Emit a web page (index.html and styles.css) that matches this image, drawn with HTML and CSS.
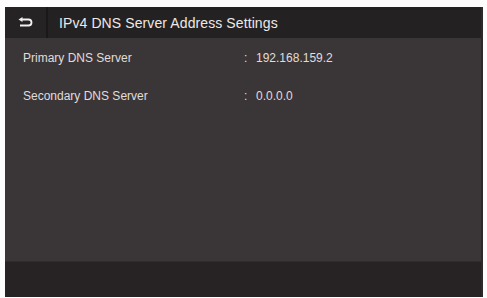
FILE: index.html
```html
<!DOCTYPE html>
<html lang="en">
<head>
    <meta charset="UTF-8">
    <meta name="viewport" content="width=device-width, initial-scale=1.0">
    <title>IPv4 DNS Server Address Settings</title>
    <link rel="stylesheet" href="styles.css">
</head>
<body>
    <div class="screen">
        <div class="header">
            <div class="back">
                <svg width="15" height="11" viewBox="0 0 15 11">
                    <path d="M4 2.5 H10.5 A3 3 0 0 1 10.5 8.5 H2" fill="none" stroke="#f2f0f0" stroke-width="1.8"/>
                    <path d="M0.5 2.5 L4.5 0 V5 Z" fill="#f2f0f0"/>
                </svg>
            </div>
            <h1>IPv4 DNS Server Address Settings</h1>
        </div>
        <div class="content">
            <div class="row">
                <span class="label">Primary DNS Server</span>
                <span class="colon">:</span>
                <span class="value">192.168.159.2</span>
            </div>
            <div class="row">
                <span class="label">Secondary DNS Server</span>
                <span class="colon">:</span>
                <span class="value">0.0.0.0</span>
            </div>
        </div>
        <div class="footer"></div>
    </div>
</body>
</html>
```

FILE: styles.css
```css
body {
    margin: 0;
    background-color: #fdfdfd;
    font-family: "Liberation Sans", Arial, sans-serif;
}
.screen {
    margin: 7px 4px 0 5px;
    height: 290px;
    display: flex;
    flex-direction: column;
    background-color: #3a3637;
    border-right: 2px solid #2e2a2b;
}
.header {
    height: 31px;
    display: flex;
    align-items: center;
    background-color: #242122;
}
.back {
    width: 41px;
    height: 31px;
    display: flex;
    align-items: center;
    justify-content: center;
    border-right: 2px solid #1b1819;
    background-color: #262324;
}
h1 {
    margin: 0 0 0 11px;
    font-size: 14px;
    font-weight: normal;
    color: #ece9e9;
    letter-spacing: 0.1px;
}
.content {
    flex: 1;
    padding-top: 1px;
}
.row {
    height: 38px;
    display: flex;
    align-items: center;
    font-size: 12px;
    color: #e0dcdc;
}
.label {
    width: 221px;
    padding-left: 18px;
}
.colon {
    width: 12px;
}
.footer {
    height: 35px;
    background-color: #272324;
    border-top: 1px solid #302c2d;
}
```
